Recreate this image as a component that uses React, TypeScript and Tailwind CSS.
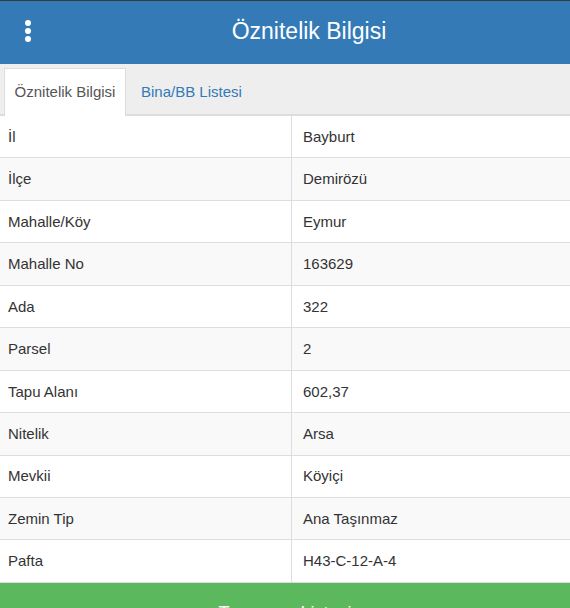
import { useState } from 'react'

const rows: [string, string][] = [
  ['İl', 'Bayburt'],
  ['İlçe', 'Demirözü'],
  ['Mahalle/Köy', 'Eymur'],
  ['Mahalle No', '163629'],
  ['Ada', '322'],
  ['Parsel', '2'],
  ['Tapu Alanı', '602,37'],
  ['Nitelik', 'Arsa'],
  ['Mevkii', 'Köyiçi'],
  ['Zemin Tip', 'Ana Taşınmaz'],
  ['Pafta', 'H43-C-12-A-4'],
]

export default function App() {
  const [tab, setTab] = useState(0)

  return (
    <div className="w-[570px] h-[608px] overflow-hidden bg-white font-['Liberation_Sans',Arial,sans-serif] text-[#333]">
      <div className="h-px bg-[#3a3a3a]" />
      {/* Header */}
      <div className="h-[63px] bg-[#337ab7] flex items-center relative">
        <button className="absolute left-[25px] top-[19px] flex flex-col gap-[2px] p-0">
          <span className="w-[6px] h-[6px] rounded-full bg-white" />
          <span className="w-[6px] h-[6px] rounded-full bg-white" />
          <span className="w-[6px] h-[6px] rounded-full bg-white" />
        </button>
        <h1 className="flex-1 text-center text-white text-[23px] leading-none pl-[48px] pb-[2px]">Öznitelik Bilgisi</h1>
      </div>

      {/* Tabs */}
      <div className="h-[52px] bg-[#eeeeee] flex items-end px-[4px] border-b-2 border-[#dddddd]">
        <button
          onClick={() => setTab(0)}
          className={`h-[48px] w-[122px] text-[15px] -mb-[2px] ${tab === 0 ? 'bg-white border border-b-0 border-[#dddddd] text-[#555]' : 'text-[#337ab7]'}`}
        >
          Öznitelik Bilgisi
        </button>
        <button
          onClick={() => setTab(1)}
          className={`h-[48px] px-[15px] text-[15px] -mb-[2px] ${tab === 1 ? 'bg-white border border-b-0 border-[#dddddd] text-[#555]' : 'text-[#337ab7]'}`}
        >
          Bina/BB Listesi
        </button>
      </div>

      {/* Table */}
      <div>
        {rows.map(([k, v], i) => (
          <div
            key={k}
            className={`h-[42.45px] flex border-b border-[#dddddd] text-[15px] ${i % 2 === 1 ? 'bg-[#f9f9f9]' : 'bg-white'}`}
          >
            <div className="w-[292px] border-r border-[#dddddd] flex items-center pl-[8px] pt-px">{k}</div>
            <div className="flex-1 flex items-center pl-[11px] pt-px">{v}</div>
          </div>
        ))}
      </div>

      {/* Action button */}
      <button className="w-full h-[58px] bg-[#5cb85c] text-white text-[18px] pt-[4px]">Taşınmaz Listesi</button>
    </div>
  )
}
